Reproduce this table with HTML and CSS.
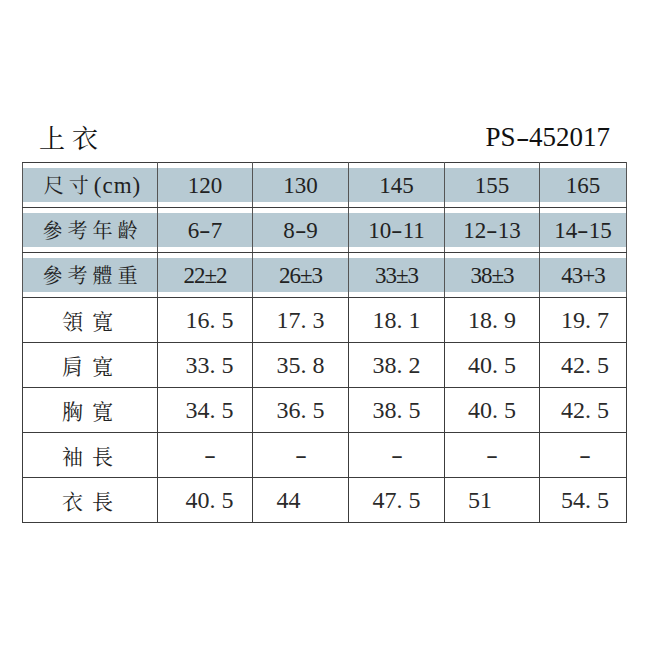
FILE: index.html
```html
<!DOCTYPE html>
<html>
<head>
<meta charset="utf-8">
<title>上衣 PS-452017</title>
<link rel="stylesheet" href="styles.css">
</head>
<body>
<div class="sheet">
  <div class="head">
    <span class="title">上衣</span>
    <span class="code">PS<span class="h">-</span>452017</span>
  </div>
  <table class="size">
    <colgroup>
      <col class="c0"><col class="c1"><col class="c2"><col class="c3"><col class="c4"><col class="c5">
    </colgroup>
    <tr class="band">
      <th class="lab">尺寸<span class="lat">(cm)</span></th>
      <td class="num">120</td><td class="num">130</td><td class="num">145</td><td class="num">155</td><td class="num">165</td>
    </tr>
    <tr class="band">
      <th class="lab">參考年齡</th>
      <td class="num">6<span class="h">-</span>7</td><td class="num">8<span class="h">-</span>9</td><td class="num">10<span class="h">-</span>11</td><td class="num">12<span class="h">-</span>13</td><td class="num">14<span class="h">-</span>15</td>
    </tr>
    <tr class="band">
      <th class="lab">參考體重</th>
      <td class="num pm">22±2</td><td class="num pm">26±3</td><td class="num pm">33±3</td><td class="num pm">38±3</td><td class="num pm">43+3</td>
    </tr>
    <tr class="body">
      <th class="lab wide">領寬</th>
      <td class="num">16<span class="d">.</span>5</td><td class="num">17<span class="d">.</span>3</td><td class="num">18<span class="d">.</span>1</td><td class="num">18<span class="d">.</span>9</td><td class="num">19<span class="d">.</span>7</td>
    </tr>
    <tr class="body">
      <th class="lab wide">肩寬</th>
      <td class="num">33<span class="d">.</span>5</td><td class="num">35<span class="d">.</span>8</td><td class="num">38<span class="d">.</span>2</td><td class="num">40<span class="d">.</span>5</td><td class="num">42<span class="d">.</span>5</td>
    </tr>
    <tr class="body">
      <th class="lab wide">胸寬</th>
      <td class="num">34<span class="d">.</span>5</td><td class="num">36<span class="d">.</span>5</td><td class="num">38<span class="d">.</span>5</td><td class="num">40<span class="d">.</span>5</td><td class="num">42<span class="d">.</span>5</td>
    </tr>
    <tr class="body">
      <th class="lab wide">袖長</th>
      <td class="num"><span class="h">-</span></td><td class="num"><span class="h">-</span></td><td class="num"><span class="h">-</span></td><td class="num"><span class="h">-</span></td><td class="num"><span class="h">-</span></td>
    </tr>
    <tr class="body">
      <th class="lab wide">衣長</th>
      <td class="num">40<span class="d">.</span>5</td><td class="num">44<span class="pad"></span></td><td class="num">47<span class="d">.</span>5</td><td class="num">51<span class="pad"></span></td><td class="num">54<span class="d">.</span>5</td>
    </tr>
  </table>
</div>
</body>
</html>
```
FILE: styles.css
```css
html, body {
  margin: 0;
  padding: 0;
  background: #ffffff;
}
body {
  font-family: "Liberation Serif", serif;
  color: #222222;
}
.sheet {
  width: 604px;
  margin-left: 22px;
  padding-top: 118px;
}
.head {
  display: flex;
  justify-content: space-between;
  align-items: center;
  height: 44px;
  padding: 0 16px 0 17px;
  box-sizing: border-box;
}
.title {
  font-family: "Noto Serif CJK TC", serif;
  font-size: 26px;
  letter-spacing: 7px;
  line-height: 1;
  color: #111111;
  margin-top: -6px;
}
.code {
  font-family: "Liberation Serif", serif;
  font-size: 27px;
  line-height: 1;
  color: #111111;
  margin-top: -6px;
}
.h {
  display: inline-block;
  width: 0.5em;
  text-align: center;
  transform: scaleX(1.5);
}
.d {
  display: inline-block;
  width: 0.5em;
  text-align: left;
}
.pad {
  display: inline-block;
  width: 1em;
}
.size {
  border-collapse: collapse;
  table-layout: fixed;
  width: 604px;
}
.c0 { width: 135px; }
.c1 { width: 95px; }
.c2 { width: 96px; }
.c3 { width: 96px; }
.c4 { width: 95px; }
.c5 { width: 87px; }
.size th,
.size td {
  border: 1px solid #3c3c3c;
  padding: 0;
  height: 44px;
  text-align: center;
  vertical-align: middle;
  font-weight: normal;
  line-height: 1;
}
.num {
  font-family: "Liberation Serif", serif;
  font-size: 23px;
}
.band th,
.band td {
  background: linear-gradient(#b7cad3, #b7cad3) center / 100% 34px no-repeat;
  border-left-color: #555555;
  border-right-color: #555555;
}
.body .num {
  font-size: 24px;
  color: #2a2a2a;
}
.size tr.body td:nth-child(2) {
  padding-left: 9px;
}
.size tr.body td:nth-child(6) {
  padding-left: 4px;
}
.pm {
  letter-spacing: -1px;
}
.lab {
  font-family: "Noto Serif CJK TC", serif;
  font-size: 20px;
  letter-spacing: 5px;
  padding-left: 5px !important;
  color: #222222;
}
.lab .lat {
  font-family: "Liberation Serif", serif;
  font-size: 23px;
  letter-spacing: 1px;
}
.lab.wide {
  font-size: 21px;
  letter-spacing: 9px;
  padding-left: 4px !important;
}
```
